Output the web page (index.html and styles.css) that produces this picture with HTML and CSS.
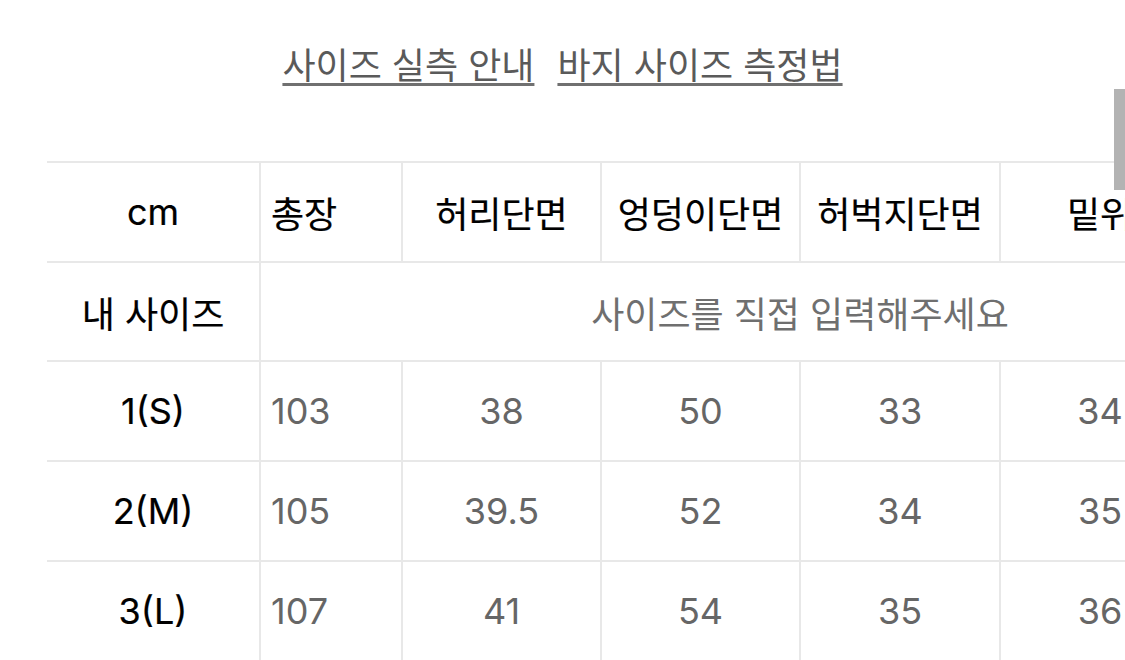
FILE: index.html
```html
<!DOCTYPE html>
<html lang="ko">
<head>
<meta charset="utf-8">
<link rel="stylesheet" href="styles.css">
</head>
<body>
<div class="page">
  <nav class="links">
    <a class="link" href="#">사이즈 실측 안내</a>
    <a class="link" href="#">바지 사이즈 측정법</a>
  </nav>
  <div class="table-wrap">
    <table class="size-table">
      <colgroup>
        <col class="c1"><col class="c2"><col class="c3"><col class="c4"><col class="c5"><col class="c6"><col class="c7">
      </colgroup>
      <thead>
        <tr>
          <th class="label">cm</th>
          <th class="left">총장</th>
          <th>허리단면</th>
          <th>엉덩이단면</th>
          <th>허벅지단면</th>
          <th>밑위</th>
          <th>밑단</th>
        </tr>
      </thead>
      <tbody>
        <tr class="mine">
          <th class="label">내 사이즈</th>
          <td class="hint" colspan="6">사이즈를 직접 입력해주세요</td>
        </tr>
        <tr>
          <th class="label">1(S)</th>
          <td class="left">103</td><td>38</td><td>50</td><td>33</td><td>34</td><td>19</td>
        </tr>
        <tr>
          <th class="label">2(M)</th>
          <td class="left">105</td><td>39.5</td><td>52</td><td>34</td><td>35</td><td>20</td>
        </tr>
        <tr>
          <th class="label">3(L)</th>
          <td class="left">107</td><td>41</td><td>54</td><td>35</td><td>36</td><td>21</td>
        </tr>
      </tbody>
    </table>
  </div>
  <div class="scrollbar"></div>
</div>
</body>
</html>
```

FILE: styles.css
```css
html, body {
  margin: 0;
  padding: 0;
  background: #ffffff;
  overflow: hidden;
}
body {
  width: 1125px;
  height: 660px;
  font-family: Inter, "Noto Sans CJK KR", sans-serif;
}
.page {
  position: relative;
  width: 1125px;
  height: 660px;
  overflow: hidden;
}
.links {
  display: flex;
  justify-content: center;
  gap: 23px;
  padding-top: 38px;
  height: 120px;
  box-sizing: border-box;
}
.link {
  font-family: "Noto Sans CJK KR", sans-serif;
  font-size: 36px;
  line-height: 50px;
  color: #5a5a5a;
  text-decoration: underline;
  text-decoration-color: #707070;
  text-decoration-thickness: 3px;
  text-underline-offset: 4px;
}
.table-wrap {
  padding-top: 41px;
  padding-left: 47px;
}
.size-table {
  border-collapse: collapse;
  table-layout: fixed;
  width: 1293px;
}
.c1 { width: 213px; }
.c2 { width: 142px; }
.c3 { width: 199px; }
.c4 { width: 199px; }
.c5 { width: 200px; }
.c6 { width: 200px; }
.c7 { width: 140px; }
.size-table th,
.size-table td {
  border: 2px solid #e8e8e8;
  height: 98px;
  padding: 0 10px;
  font-size: 36px;
  text-align: center;
  white-space: nowrap;
  overflow: hidden;
}
.size-table .mine th,
.size-table .mine td {
  height: 97px;
}
.size-table th {
  font-weight: 400;
  color: #000000;
  -webkit-text-stroke: 0.2px #000000;
}
.size-table td {
  color: #666666;
}
.size-table tr > :first-child {
  border-left: none;
}
.size-table .left {
  text-align: left;
}
.size-table .hint {
  color: #6f6f6f;
}
.scrollbar {
  position: absolute;
  right: 0;
  top: 89px;
  width: 11px;
  height: 101px;
  background: #b3b3b3;
}
```
